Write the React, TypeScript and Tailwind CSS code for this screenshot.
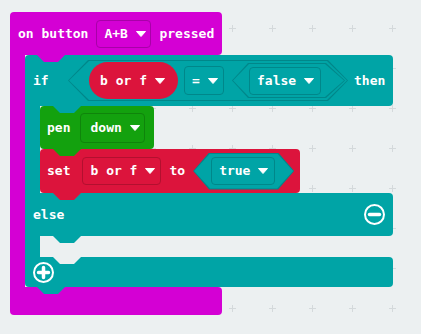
import React from 'react';

const Caret = () => (
  <svg width="10" height="6" viewBox="0 0 10 6" className="shrink-0">
    <path d="M0.5 0.5h9L5 5.5z" fill="#fff" stroke="#fff" strokeLinejoin="round" />
  </svg>
);

// notch bump that hangs under a block and sits on the one below
const Bump = ({ className }: { className: string }) => (
  <div
    className={`absolute z-10 h-[7px] w-[28px] [clip-path:polygon(0_0,100%_0,calc(100%_-_7px)_100%,7px_100%)] ${className}`}
  />
);

const Grid = () => (
  <svg className="absolute inset-0" width="421" height="334">
    <defs>
      <pattern id="grid" x="12" y="8" width="40" height="40" patternUnits="userSpaceOnUse">
        <path d="M17 20.5h7M20.5 17v7" stroke="#d4d9db" strokeWidth="1" />
      </pattern>
    </defs>
    <rect width="421" height="334" fill="url(#grid)" />
  </svg>
);

function Dropdown({ label, className }: { label: string; className: string }) {
  return (
    <div className={`flex items-center gap-[8px] rounded-[4px] border pl-[7px] ${className}`}>
      <span>{label}</span>
      <Caret />
    </div>
  );
}

export default function App() {
  return (
    <div className="relative h-[334px] w-[421px] overflow-hidden bg-[#ecf0f1] font-['DejaVu_Sans_Mono',monospace] text-[13px] font-bold text-white">
      <Grid />

      <div className="relative flex flex-col items-start pl-[10px] pt-[12px]">
        {/* on button pressed */}
        <div className="relative flex h-[43px] w-[212px] items-center gap-[8px] rounded-t-[4px] rounded-br-[4px] bg-[#d400d4] pl-[8px]">
          <span>on button</span>
          <Dropdown label="A+B" className="h-[28px] w-[55px] border-[#a800a8]" />
          <span>pressed</span>
          <Bump className="left-[27px] top-full bg-[#d400d4]" />
        </div>

        <div className="flex">
          <div className="w-[15px] bg-[#d400d4]" />

          {/* if / else */}
          <div className="relative flex w-[368px] flex-col">
            <div className="relative flex h-[51px] items-center rounded-t-[4px] rounded-br-[4px] bg-[#00a4a6] pl-[8px]">
              <span className="w-[35px]">if</span>
              <div className="h-[41px] w-[280px] bg-[#00878a] p-[1px] [clip-path:polygon(20px_0,calc(100%_-_20px)_0,100%_50%,calc(100%_-_20px)_100%,20px_100%,0_50%)]">
                <div className="flex h-full w-full items-center bg-[#00a4a6] pl-[20px] [clip-path:polygon(20px_0,calc(100%_-_20px)_0,100%_50%,calc(100%_-_20px)_100%,20px_100%,0_50%)]">
                  <div className="flex h-[37px] w-[89px] items-center gap-[8px] rounded-full bg-[#dc143c] pl-[11px]">
                    <span>b or f</span>
                    <Caret />
                  </div>
                  <Dropdown label="=" className="ml-[6px] h-[29px] w-[40px] border-[#00878a]" />
                  <div className="ml-[8px] h-[35px] w-[113px] bg-[#00878a] p-[1px] [clip-path:polygon(16px_0,calc(100%_-_19px)_0,100%_50%,calc(100%_-_19px)_100%,16px_100%,0_50%)]">
                    <div className="flex h-full w-full items-center bg-[#00a4a6] pl-[16px] [clip-path:polygon(16px_0,calc(100%_-_19px)_0,100%_50%,calc(100%_-_19px)_100%,16px_100%,0_50%)]">
                      <Dropdown label="false" className="h-[28px] w-[72px] border-[#00878a]" />
                    </div>
                  </div>
                </div>
              </div>
              <span className="ml-[6px]">then</span>
              <Bump className="left-[28px] top-full bg-[#00a4a6]" />
            </div>

            <div className="flex">
              <div className="w-[15px] bg-[#00a4a6]" />
              <div className="flex flex-col items-start">
                <div className="relative flex h-[43px] w-[114px] items-center gap-[10px] rounded-[4px] bg-[#13a10e] pl-[7px]">
                  <span>pen</span>
                  <Dropdown label="down" className="h-[30px] w-[65px] border-[#0f840b] pl-[9px]" />
                  <Bump className="left-[13px] top-full bg-[#13a10e]" />
                </div>
                <div className="relative flex h-[44px] w-[260px] items-center rounded-[4px] bg-[#dc143c] pl-[7px]">
                  <span>set</span>
                  <Dropdown label="b or f" className="ml-[12px] h-[28px] w-[79px] border-[#b3102f]" />
                  <span className="ml-[8px]">to</span>
                  <div className="ml-[8px] h-[37px] w-[101px] bg-[#00878a] p-[1px] [clip-path:polygon(16px_0,calc(100%_-_16px)_0,100%_50%,calc(100%_-_16px)_100%,16px_100%,0_50%)]">
                    <div className="flex h-full w-full items-center bg-[#00a4a6] pl-[17px] [clip-path:polygon(16px_0,calc(100%_-_16px)_0,100%_50%,calc(100%_-_16px)_100%,16px_100%,0_50%)]">
                      <Dropdown label="true" className="h-[28px] w-[64px] border-[#00878a]" />
                    </div>
                  </div>
                  <Bump className="left-[13px] top-full bg-[#dc143c]" />
                </div>
              </div>
            </div>

            <div className="relative flex h-[43px] items-center justify-between rounded-r-[4px] bg-[#00a4a6] pl-[8px] pr-[8px]">
              <span>else</span>
              <svg width="21" height="21" viewBox="0 0 21 21">
                <circle cx="10.5" cy="10.5" r="9.5" fill="none" stroke="#fff" strokeWidth="2" />
                <path d="M5.5 10.5h10" stroke="#fff" strokeWidth="3.5" strokeLinecap="round" />
              </svg>
              <Bump className="left-[28px] top-full bg-[#00a4a6]" />
            </div>

            <div className="flex h-[21px]">
              <div className="w-[15px] bg-[#00a4a6]" />
            </div>

            <div className="relative flex h-[30px] items-center rounded-b-[4px] rounded-tr-[4px] bg-[#00a4a6] pl-[8px]">
              <Bump className="left-[28px] top-0 bg-[#ecf0f1]" />
              <svg width="21" height="21" viewBox="0 0 21 21">
                <circle cx="10.5" cy="10.5" r="9.5" fill="none" stroke="#fff" strokeWidth="2" />
                <path d="M5.5 10.5h10M10.5 5.5v10" stroke="#fff" strokeWidth="3.5" strokeLinecap="round" />
              </svg>
              <Bump className="left-[12px] top-full bg-[#00a4a6]" />
            </div>
          </div>
        </div>

        <div className="h-[28px] w-[212px] rounded-b-[4px] rounded-tr-[4px] bg-[#d400d4]" />
      </div>
    </div>
  );
}
